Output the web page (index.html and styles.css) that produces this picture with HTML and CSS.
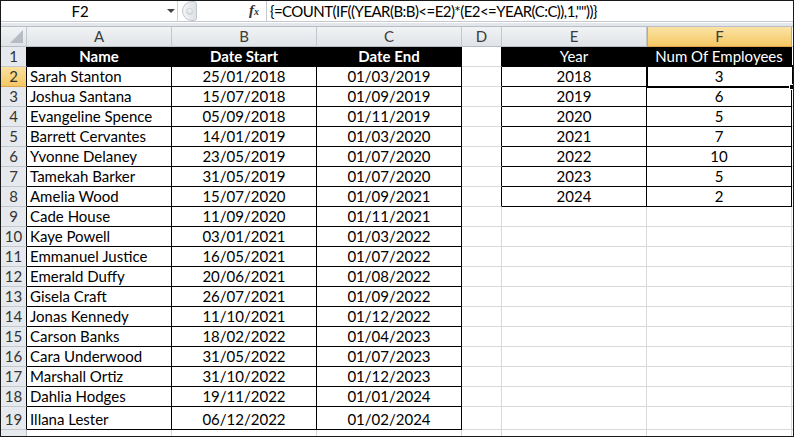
FILE: index.html
```html
<!DOCTYPE html>
<html>
<head>
<meta charset="utf-8">
<link rel="stylesheet" href="styles.css">
</head>
<body>
<div class="window">
  <div class="fbar">
    <div class="namebox"><span class="name">F2</span><span class="dd"></span></div>
    <div class="mid"><span class="grip"><span class="dot"></span></span><span class="fx">f<span class="fxs">x</span></span></div>
    <div class="formula">{=COUNT(IF((YEAR(B:B)&lt;=E2)*(E2&lt;=YEAR(C:C)),1,""))}</div>
  </div>
  <div class="sep"></div>
  <div class="sheet">
    <div class="row colhdr">
      <div class="corner"><span class="tri"></span></div>
      <div class="ch">A</div><div class="ch">B</div><div class="ch">C</div><div class="ch">D</div><div class="ch">E</div><div class="ch sel">F</div><div class="ch last"></div>
    </div>
    <div class="row">
      <div class="rh">1</div>
      <div class="c hd b">Name</div><div class="c hd b">Date Start</div><div class="c hd b">Date End</div><div class="c dt"></div><div class="c hd">Year</div><div class="c hd">Num Of Employees</div><div class="c last"></div>
    </div>
    <div class="row">
      <div class="rh sel">2</div>
      <div class="c t">Sarah Stanton</div><div class="c t m">25/01/2018</div><div class="c t m">01/03/2019</div><div class="c dt"></div><div class="c t m">2018</div><div class="c t m">3</div><div class="c last"></div>
    </div>
    <div class="row">
      <div class="rh">3</div>
      <div class="c t">Joshua Santana</div><div class="c t m">15/07/2018</div><div class="c t m">01/09/2019</div><div class="c dt"></div><div class="c t m">2019</div><div class="c t m">6</div><div class="c last"></div>
    </div>
    <div class="row">
      <div class="rh">4</div>
      <div class="c t">Evangeline Spence</div><div class="c t m">05/09/2018</div><div class="c t m">01/11/2019</div><div class="c dt"></div><div class="c t m">2020</div><div class="c t m">5</div><div class="c last"></div>
    </div>
    <div class="row">
      <div class="rh">5</div>
      <div class="c t">Barrett Cervantes</div><div class="c t m">14/01/2019</div><div class="c t m">01/03/2020</div><div class="c dt"></div><div class="c t m">2021</div><div class="c t m">7</div><div class="c last"></div>
    </div>
    <div class="row">
      <div class="rh">6</div>
      <div class="c t">Yvonne Delaney</div><div class="c t m">23/05/2019</div><div class="c t m">01/07/2020</div><div class="c dt"></div><div class="c t m">2022</div><div class="c t m">10</div><div class="c last"></div>
    </div>
    <div class="row">
      <div class="rh">7</div>
      <div class="c t">Tamekah Barker</div><div class="c t m">31/05/2019</div><div class="c t m">01/07/2020</div><div class="c dt"></div><div class="c t m">2023</div><div class="c t m">5</div><div class="c last"></div>
    </div>
    <div class="row">
      <div class="rh">8</div>
      <div class="c t">Amelia Wood</div><div class="c t m">15/07/2020</div><div class="c t m">01/09/2021</div><div class="c dt"></div><div class="c t m">2024</div><div class="c t m">2</div><div class="c last"></div>
    </div>
    <div class="row">
      <div class="rh">9</div>
      <div class="c t">Cade House</div><div class="c t m">11/09/2020</div><div class="c t m">01/11/2021</div><div class="c"></div><div class="c"></div><div class="c"></div><div class="c last"></div>
    </div>
    <div class="row">
      <div class="rh">10</div>
      <div class="c t">Kaye Powell</div><div class="c t m">03/01/2021</div><div class="c t m">01/03/2022</div><div class="c"></div><div class="c"></div><div class="c"></div><div class="c last"></div>
    </div>
    <div class="row">
      <div class="rh">11</div>
      <div class="c t">Emmanuel Justice</div><div class="c t m">16/05/2021</div><div class="c t m">01/07/2022</div><div class="c"></div><div class="c"></div><div class="c"></div><div class="c last"></div>
    </div>
    <div class="row">
      <div class="rh">12</div>
      <div class="c t">Emerald Duffy</div><div class="c t m">20/06/2021</div><div class="c t m">01/08/2022</div><div class="c"></div><div class="c"></div><div class="c"></div><div class="c last"></div>
    </div>
    <div class="row">
      <div class="rh">13</div>
      <div class="c t">Gisela Craft</div><div class="c t m">26/07/2021</div><div class="c t m">01/09/2022</div><div class="c"></div><div class="c"></div><div class="c"></div><div class="c last"></div>
    </div>
    <div class="row">
      <div class="rh">14</div>
      <div class="c t">Jonas Kennedy</div><div class="c t m">11/10/2021</div><div class="c t m">01/12/2022</div><div class="c"></div><div class="c"></div><div class="c"></div><div class="c last"></div>
    </div>
    <div class="row">
      <div class="rh">15</div>
      <div class="c t">Carson Banks</div><div class="c t m">18/02/2022</div><div class="c t m">01/04/2023</div><div class="c"></div><div class="c"></div><div class="c"></div><div class="c last"></div>
    </div>
    <div class="row">
      <div class="rh">16</div>
      <div class="c t">Cara Underwood</div><div class="c t m">31/05/2022</div><div class="c t m">01/07/2023</div><div class="c"></div><div class="c"></div><div class="c"></div><div class="c last"></div>
    </div>
    <div class="row">
      <div class="rh">17</div>
      <div class="c t">Marshall Ortiz</div><div class="c t m">31/10/2022</div><div class="c t m">01/12/2023</div><div class="c"></div><div class="c"></div><div class="c"></div><div class="c last"></div>
    </div>
    <div class="row">
      <div class="rh">18</div>
      <div class="c t">Dahlia Hodges</div><div class="c t m">19/11/2022</div><div class="c t m">01/01/2024</div><div class="c"></div><div class="c"></div><div class="c"></div><div class="c last"></div>
    </div>
    <div class="row tall">
      <div class="rh">19</div>
      <div class="c t">Illana Lester</div><div class="c t m">06/12/2022</div><div class="c t m">01/02/2024</div><div class="c"></div><div class="c"></div><div class="c"></div><div class="c last"></div>
    </div>
    <div class="row stub">
      <div class="rh plain"></div>
      <div class="c"></div><div class="c"></div><div class="c"></div><div class="c"></div><div class="c"></div><div class="c"></div><div class="c last"></div>
    </div>
    <div class="selbox"><span class="handle"></span></div>
  </div>
</div>
</body>
</html>
```
FILE: styles.css
```css
* { box-sizing: border-box; }
html, body { margin: 0; padding: 0; background: #fff; }
.window {
  width: 794px;
  height: 437px;
  border: 1px solid #1a1a1a;
  overflow: hidden;
  font-family: Lato, "Open Sans", sans-serif;
  font-size: 15px;
  color: #000;
  background: #fff;
}
.fbar {
  display: flex;
  height: 21px;
  background: #fff;
  border-bottom: 1px solid #c4c8ce;
}
.namebox {
  width: 177px;
  display: flex;
  align-items: center;
  border-right: 1px solid #d0d4da;
  position: relative;
}
.name { flex: 1; text-align: center; padding-right: 8px; line-height: 20px; }
.dd {
  width: 0; height: 0;
  border-left: 4px solid transparent;
  border-right: 4px solid transparent;
  border-top: 4px solid #444;
  margin-right: 2px;
}
.mid {
  width: 88px;
  display: flex;
  align-items: center;
  justify-content: space-between;
  padding: 0 7px 0 4px;
  background: #fff;
}
.grip {
  width: 15px;
  height: 20px;
  border-radius: 10px 3px 3px 10px;
  background: linear-gradient(90deg, #f4f5f7, #dde0e4);
  border: 1px solid #c2c6cc;
  display: flex;
  align-items: center;
  justify-content: center;
}
.dot { width: 7px; height: 7px; border-radius: 50%; background: linear-gradient(#f7f8f9, #d7dadf); border: 1px solid #c9cdd2; }
.fx {
  font-family: "Liberation Serif", serif;
  font-style: italic;
  font-weight: bold;
  font-size: 15px;
  color: #333;
  line-height: 20px;
}
.fxs { font-size: 10px; }
.formula {
  flex: 1;
  border-left: 1px solid #c4c8ce;
  padding-left: 3px;
  line-height: 20px;
  letter-spacing: -0.55px;
  white-space: nowrap;
}
.sep {
  height: 5px;
  border-top: 1px solid #fff;
  border-bottom: 1px solid #b9bec5;
  background: #e3e6ea;
}
.sheet { position: relative; }
.row {
  display: grid;
  grid-template-columns: 26px 145px 145px 145px 40px 145px 145px 1px;
  height: 20px;
}
.row.tall { height: 23px; }
.row.stub { height: 8px; }
.row > div {
  border-right: 1px solid #d9d9d9;
  border-bottom: 1px solid #d9d9d9;
  display: flex;
  align-items: flex-end;
  white-space: nowrap;
  overflow: hidden;
  line-height: 19px;
}
.colhdr > div {
  background: linear-gradient(#f1f3f5, #e0e3e7);
  border-right: 1px solid #c2c7cd;
  border-bottom: 1px solid #b9bec5;
  justify-content: center;
  align-items: center;
  color: #3c3c3c;
}
.colhdr > .ch.sel {
  background: linear-gradient(#fbe3a6, #f5c863);
  border-right: 1px solid #e0a24a;
  border-bottom: 1px solid #e0a24a;
  border-left: 1px solid #e0a24a;
}
.colhdr > .ch.last { border-right: none; background: #fff; }
.corner { position: relative; }
.tri {
  position: absolute;
  right: 3px;
  bottom: 3px;
  width: 0; height: 0;
  border-left: 13px solid transparent;
  border-bottom: 13px solid #b7bcc4;
}
.row > .rh {
  background: #e6e9ed;
  border-right: 1px solid #000;
  border-bottom: 1px solid #c4c9d0;
  justify-content: center;
  color: #333;
}
.row > .rh.sel {
  background: linear-gradient(#fbe1a0, #f5c863);
  border-bottom: 1px solid #e0a24a;
}
.row > .rh.plain { border-right: 1px solid #b9bec5; }
.row > .c.t { border-color: #000; padding-left: 3px; }
.row > .c.t.m { justify-content: center; padding-left: 0; }
.row > .c.hd {
  background: #000;
  border-color: #000;
  color: #fff;
  justify-content: center;
}
.row > .c.hd.b { font-weight: bold; }
.row > .c.dt { border-right-color: #000; }
.row > .c.last { border-right: none; }
.selbox {
  position: absolute;
  left: 645px;
  top: 38px;
  width: 148px;
  height: 23px;
  border: 2px solid #000;
  box-shadow: inset 0 0 0 1px #fff;
}
.handle {
  position: absolute;
  right: -3px;
  bottom: -4px;
  width: 6px;
  height: 6px;
  background: #000;
  border: 1px solid #fff;
}
```
